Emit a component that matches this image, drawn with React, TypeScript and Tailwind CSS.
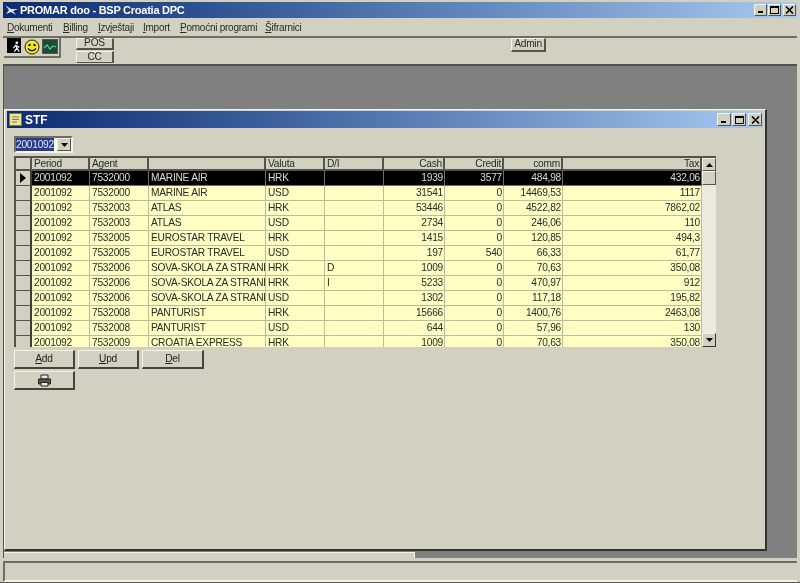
const cols = "grid grid-cols-[16px_58px_59px_117px_59px_59px_61px_59px_59px_139px]";
const rows: string[][] = [
  ["2001092","7532000","MARINE AIR","HRK","","1939","3577","484,98","432,06"],
  ["2001092","7532000","MARINE AIR","USD","","31541","0","14469,53","1117"],
  ["2001092","7532003","ATLAS","HRK","","53446","0","4522,82","7862,02"],
  ["2001092","7532003","ATLAS","USD","","2734","0","246,06","110"],
  ["2001092","7532005","EUROSTAR TRAVEL","HRK","","1415","0","120,85","494,3"],
  ["2001092","7532005","EUROSTAR TRAVEL","USD","","197","540","66,33","61,77"],
  ["2001092","7532006","SOVA-SKOLA ZA STRANE","HRK","D","1009","0","70,63","350,08"],
  ["2001092","7532006","SOVA-SKOLA ZA STRANE","HRK","I","5233","0","470,97","912"],
  ["2001092","7532006","SOVA-SKOLA ZA STRANE","USD","","1302","0","117,18","195,82"],
  ["2001092","7532008","PANTURIST","HRK","","15666","0","1400,76","2463,08"],
  ["2001092","7532008","PANTURIST","USD","","644","0","57,96","130"],
  ["2001092","7532009","CROATIA EXPRESS","HRK","","1009","0","70,63","350,08"],
];
const headers = ["Period","Agent","","Valuta","D/I","Cash","Credit","comm","Tax"];
const raised = "border border-t-[#f4f3ea] border-l-[#f4f3ea] border-r-[#55544c] border-b-[#55544c] bg-[#d2d0c0]";

function WinButtons({ size }: { size: string }) {
  return (
    <div className="flex items-center gap-[1px]">
      <div className={`${size} ${raised} flex items-end pl-[3px] pb-[2px]`}><div className="w-[5px] h-[2px] bg-black" /></div>
      <div className={`${size} ${raised} flex items-center justify-center`}><div className="w-[9px] h-[8px] border border-t-2 border-black" /></div>
      <div className={`${size} ${raised} ml-[1px] flex items-center justify-center`}>
        <svg width="9" height="8" viewBox="0 0 9 8"><path d="M1 0.5 L8 7.5 M8 0.5 L1 7.5" stroke="#000" strokeWidth="1.6" /></svg>
      </div>
    </div>
  );
}

function Mnemonic({ text }: { text: string }) {
  return <span className="whitespace-nowrap"><span className="underline">{text[0]}</span>{text.slice(1)}</span>;
}

function GridRow({ row, index }: { row: string[]; index: number }) {
  const selected = index === 0;
  const cellBase = selected ? "bg-black text-[#dcdcd4] border-r border-b border-[#6f6e62]" : "bg-[#ffffc4] text-[#2a2a2a] border-r border-b border-[#bdbb9c]";
  return (
    <div className={`${cols} h-[15px]`}>
      <div className="bg-[#d2d0c0] border-r-2 border-b border-[#55544c] border-r-[#3c3c38] flex items-center justify-center">
        {selected && <svg width="6" height="10" viewBox="0 0 6 10"><path d="M0 0 L6 5 L0 10 Z" fill="#000" /></svg>}
      </div>
      {row.map((c, i) => (
        <div key={i} className={`${cellBase} pl-[2px] pr-[1px] leading-[13px] overflow-hidden whitespace-nowrap ${i >= 5 ? "text-right" : ""}`}>{c}</div>
      ))}
    </div>
  );
}

function Btn({ children, w }: { children: React.ReactNode; w: string }) {
  return (
    <div className={`${w} h-[19px] border border-t-[#f4f3ea] border-l-[#f4f3ea] border-r-[#45443c] border-b-[#45443c] border-r-2 border-b-2 bg-[#d2d0c0] flex items-center justify-center text-[#222]`}>
      {children}
    </div>
  );
}

export default function App() {
  return (
    <div className="w-[800px] h-[583px] bg-[#d2d0c0] blur-[0.45px] flex flex-col pl-[3px] pr-[3px] pt-[2px] border-b border-[#55544c] overflow-hidden text-[10.2px] tracking-[-0.25px] text-[#2a2a2a] font-['Liberation_Sans',Arial,sans-serif]">
      {/* main title */}
      <div className="h-[16px] shrink-0 bg-gradient-to-r from-[#0c2a72] to-[#a6caf0] flex items-center justify-between pl-[2px] pr-[1px]">
        <div className="flex items-center gap-[1px]">
          <svg width="14" height="12" viewBox="0 0 14 12"><path d="M0 1 L6 5 L13 5 L8 7 L11 11 L6 8 L1 10 L4 6 Z" fill="#dfe4ea" /></svg>
          <span className="text-white font-bold text-[11px] leading-none tracking-[-0.25px]">PROMAR doo - BSP Croatia DPC</span>
        </div>
        <WinButtons size="w-[13px] h-[12px]" />
      </div>
      {/* menu */}
      <div className="h-[18px] shrink-0 flex items-center pl-[4px] text-[10px]">
        <div className="w-[56px]"><Mnemonic text="Dokumenti" /></div>
        <div className="w-[35px]"><Mnemonic text="Billing" /></div>
        <div className="w-[45px]"><Mnemonic text="Izvještaji" /></div>
        <div className="w-[37px]"><Mnemonic text="Import" /></div>
        <div className="w-[85px]"><Mnemonic text="Pomoćni programi" /></div>
        <div><Mnemonic text="Šifrarnici" /></div>
      </div>
      {/* toolbar */}
      <div className="h-[28px] shrink-0 border-t-2 border-[#6f6e62] flex pl-[1px]">
        <div className="w-[57px] h-[20px] border-r-2 border-b-2 border-[#6f6e62] flex items-start gap-[1px] pl-[3px]">
          <div className="w-[14px] h-[15px] bg-black flex items-end justify-end">
            <svg width="10" height="13" viewBox="0 0 12 14"><circle cx="7" cy="2.5" r="1.6" fill="#fff" /><path d="M6 5 L3 9 M6 5 L7 9 L4 13 M7 9 L10 13 M6 6 L10 8" stroke="#fff" strokeWidth="1.5" fill="none" /></svg>
          </div>
          <div className="ml-[1px] w-[17px] h-[17px] flex items-center justify-center">
            <svg width="16" height="16" viewBox="0 0 16 16"><circle cx="8" cy="8" r="7" fill="#f4e820" stroke="#222" strokeWidth="1" /><circle cx="5.5" cy="6" r="1.2" fill="#111" /><circle cx="10.5" cy="6" r="1.2" fill="#111" /><path d="M4 9.5 Q8 14 12 9.5" stroke="#111" strokeWidth="1.3" fill="none" /></svg>
          </div>
          <div className="w-[17px] h-[17px] flex items-center justify-center">
            <svg width="16" height="15" viewBox="0 0 16 15"><rect x="0.5" y="0.5" width="15" height="14" fill="#1c4a3c" stroke="#555" /><path d="M2 9 L5 6 L8 10 L11 7 L14 8" stroke="#52d27a" strokeWidth="1.2" fill="none" /></svg>
          </div>
        </div>
        <div className="ml-[15px] flex flex-col gap-[1px]">
          <div className="w-[38px] h-[12px] border-r-2 border-b-2 border-[#55544c] border-t border-l border-t-[#f4f3ea] border-l-[#f4f3ea] flex items-center justify-center leading-none">POS</div>
          <div className="w-[38px] h-[12px] border-r-2 border-b border-[#55544c] border-t border-l border-t-[#f4f3ea] border-l-[#f4f3ea] flex items-center justify-center leading-none">CC</div>
        </div>
        <div className="ml-[397px] w-[35px] h-[14px] border-r-2 border-b-2 border-[#55544c] border-t border-l border-t-[#f4f3ea] border-l-[#f4f3ea] flex items-center justify-center leading-none">Admin</div>
      </div>
      {/* MDI area */}
      <div className="h-[494px] shrink-0 bg-[#808080] border-t-2 border-l border-[#55544c] flex flex-col">
        <div className="h-[486px] pt-[43px] overflow-hidden shrink-0">
          <div className="w-[763px] h-[442px] bg-[#d2d0c0] border border-t-[#f4f3ea] border-l-[#f4f3ea] border-r-[#33332e] border-b-[#33332e] border-r-2 border-b-2 pl-[2px] pr-[2px] pt-[1px] flex flex-col">
            {/* child title */}
            <div className="h-[17px] shrink-0 bg-gradient-to-r from-[#0c2a72] to-[#a6caf0] flex items-center justify-between pl-[2px] pr-[1px]">
              <div className="flex items-center gap-[3px]">
                <svg width="13" height="13" viewBox="0 0 13 13"><rect x="0.5" y="0.5" width="12" height="12" fill="#f2e48a" stroke="#7a7a50" /><path d="M3 4 H10 M3 6.5 H10 M3 9 H8" stroke="#777" strokeWidth="1" /></svg>
                <span className="text-white font-bold text-[12px] leading-none tracking-normal">STF</span>
              </div>
              <WinButtons size="w-[14px] h-[13px]" />
            </div>
            {/* combo */}
            <div className="mt-[8px] ml-[7px] w-[59px] h-[17px] shrink-0 border-2 border-t-[#6f6e62] border-l-[#6f6e62] border-r-[#f4f3ea] border-b-[#f4f3ea] bg-[#ffffd8] flex items-center">
              <span className="bg-[#2a3a8a] text-[#dfe6f5] leading-[13px] h-[13px]">2001092</span>
              <div className={`ml-auto w-[14px] h-[13px] ${raised} flex items-center justify-center`}>
                <svg width="7" height="4" viewBox="0 0 7 4"><path d="M0 0 H7 L3.5 4 Z" fill="#000" /></svg>
              </div>
            </div>
            {/* grid */}
            <div className="mt-[3px] ml-[7px] w-[702px] h-[191px] shrink-0 flex overflow-hidden border-t-2 border-l-2 border-[#55544c]">
              <div className="w-[686px] shrink-0">
                <div className={`${cols} h-[13px] bg-[#d2d0c0]`}>
                  <div className="border-r-2 border-b-2 border-[#55544c]" />
                  {headers.map((h, i) => (
                    <div key={i} className={`border-r-2 border-b-2 border-[#55544c] pl-[2px] pr-[1px] leading-[11px] ${i >= 5 ? "text-right" : ""}`}>{h}</div>
                  ))}
                </div>
                {rows.map((r, i) => <GridRow key={i} row={r} index={i} />)}
              </div>
              <div className="w-[14px] shrink-0 bg-[#eceae0] flex flex-col">
                <div className={`h-[13px] ${raised} flex items-center justify-center`}>
                  <svg width="7" height="4" viewBox="0 0 7 4"><path d="M0 4 H7 L3.5 0 Z" fill="#000" /></svg>
                </div>
                <div className={`h-[14px] ${raised}`} />
                <div className="flex-1" />
                <div className="h-[14px] border border-t-[#f4f3ea] border-l-[#f4f3ea] border-r-[#33332e] border-b-[#33332e] bg-[#d2d0c0] flex items-center justify-center">
                  <svg width="7" height="4" viewBox="0 0 7 4"><path d="M0 0 H7 L3.5 4 Z" fill="#000" /></svg>
                </div>
              </div>
            </div>
            {/* buttons */}
            <div className="mt-[3px] ml-[7px] flex gap-[3px]">
              <Btn w="w-[61px]"><Mnemonic text="Add" /></Btn>
              <Btn w="w-[61px]"><Mnemonic text="Upd" /></Btn>
              <Btn w="w-[62px]"><Mnemonic text="Del" /></Btn>
            </div>
            <div className="mt-[2px] ml-[7px]">
              <Btn w="w-[61px]">
                <svg width="15" height="13" viewBox="0 0 15 13"><path d="M4 1 H11 V5 H4 Z" fill="#e8e8e0" stroke="#222" /><path d="M1.5 5 H13.5 V10 H1.5 Z" fill="#55544c" stroke="#222" /><path d="M4 8.5 H11 V12 H4 Z" fill="#e8e8e0" stroke="#222" /></svg>
              </Btn>
            </div>
          </div>
        </div>
        {/* mdi scrollbar */}
        <div className="h-[6px] w-[411px] bg-[#d2d0c0] border-t border-r border-[#f4f3ea] shrink-0" />
      </div>
      {/* status */}
      <div className="h-[21px] mt-[3px] shrink-0 border-t-2 border-l-2 border-b-2 border-[#6f6e62] border-b-[#f4f3ea]" />
    </div>
  );
}
